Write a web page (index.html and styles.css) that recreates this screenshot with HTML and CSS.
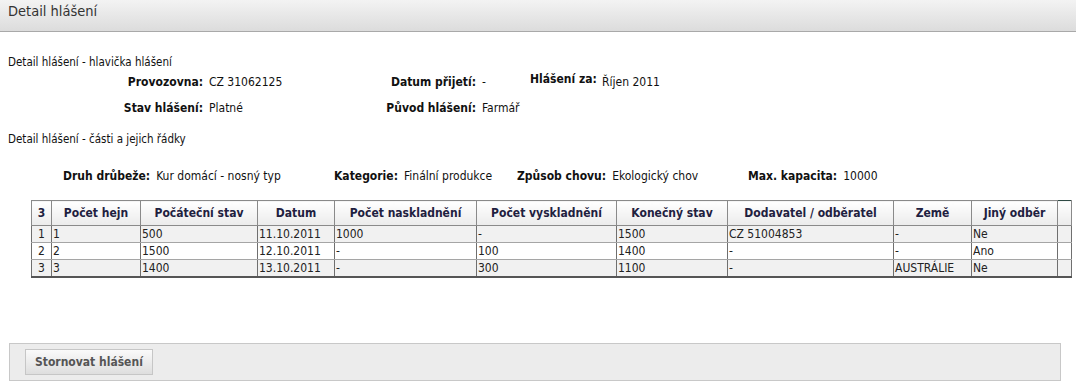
FILE: index.html
```html
<!DOCTYPE html>
<html lang="cs">
<head>
    <meta charset="UTF-8">
    <title>Detail hlášení</title>
    <link rel="stylesheet" href="styles.css">
</head>
<body>
    <div class="page-header">Detail hlášení</div>

    <div class="content">
        <div class="section-title first">Detail hlášení - hlavička hlášení</div>
        <div class="head-grid">
            <span class="lbl">Provozovna:</span>
            <span class="val">CZ 31062125</span>
            <span class="lbl">Datum přijetí:</span>
            <span class="val">-</span>
            <span class="lbl lbl-left">Hlášení za:</span>
            <span class="val">Říjen 2011</span>

            <span class="lbl">Stav hlášení:</span>
            <span class="val">Platné</span>
            <span class="lbl">Původ hlášení:</span>
            <span class="val">Farmář</span>
            <span></span>
            <span></span>
        </div>

        <div class="section-title">Detail hlášení - části a jejich řádky</div>
        <div class="part-row">
            <div class="pair"><b>Druh drůbeže:</b><span>Kur domácí - nosný typ</span></div>
            <div class="pair"><b>Kategorie:</b><span>Finální produkce</span></div>
            <div class="pair"><b>Způsob chovu:</b><span>Ekologický chov</span></div>
            <div class="pair"><b>Max. kapacita:</b><span>10000</span></div>
        </div>

        <table class="grid">
            <colgroup>
                <col style="width: 20px">
                <col style="width: 89px">
                <col style="width: 117px">
                <col style="width: 77px">
                <col style="width: 142px">
                <col style="width: 140px">
                <col style="width: 111px">
                <col style="width: 166px">
                <col style="width: 78px">
                <col style="width: 86px">
                <col style="width: 14px">
            </colgroup>
            <thead>
                <tr>
                    <th>3</th>
                    <th>Počet hejn</th>
                    <th>Počáteční stav</th>
                    <th>Datum</th>
                    <th>Počet naskladnění</th>
                    <th>Počet vyskladnění</th>
                    <th>Konečný stav</th>
                    <th>Dodavatel / odběratel</th>
                    <th>Země</th>
                    <th>Jiný odběr</th>
                    <th class="filler"></th>
                </tr>
            </thead>
            <tbody>
                <tr class="odd">
                    <td class="num">1</td><td>1</td><td>500</td><td>11.10.2011</td><td>1000</td><td>-</td><td>1500</td><td>CZ 51004853</td><td>-</td><td>Ne</td><td></td>
                </tr>
                <tr>
                    <td class="num">2</td><td>2</td><td>1500</td><td>12.10.2011</td><td>-</td><td>100</td><td>1400</td><td>-</td><td>-</td><td>Ano</td><td></td>
                </tr>
                <tr class="odd">
                    <td class="num">3</td><td>3</td><td>1400</td><td>13.10.2011</td><td>-</td><td>300</td><td>1100</td><td>-</td><td>AUSTRÁLIE</td><td>Ne</td><td></td>
                </tr>
            </tbody>
        </table>
    </div>

    <div class="footer-bar">
        <button class="btn" type="button">Stornovat hlášení</button>
    </div>
</body>
</html>
```

FILE: styles.css
```css
body {
    margin: 0;
    padding: 0;
    font-family: "DejaVu Sans Condensed", "DejaVu Sans", sans-serif;
    font-size: 12px;
    line-height: 14px;
    color: #111;
    background: #fff;
}

.page-header {
    height: 32px;
    padding: 3px 0 0 8px;
    box-sizing: border-box;
    font-size: 14.5px;
    line-height: 17px;
    color: #333;
    background: linear-gradient(#f3f3f3, #dcdcdc);
    border-bottom: 1px solid #a9a9a9;
}

.content {
    padding: 0 0 0 8px;
}

.section-title {
    margin-top: 17px;
    font-size: 11.5px;
}

.section-title.first {
    margin-top: 23px;
}

.head-grid {
    display: grid;
    grid-template-columns: 195px 170px 91px 42px 66px auto;
    column-gap: 6px;
    row-gap: 12px;
    margin-top: 6px;
    align-items: start;
    white-space: nowrap;
}

.head-grid .lbl {
    font-weight: bold;
    text-align: right;
}

.head-grid .lbl-left {
    text-align: left;
    margin-top: -3px;
}

.part-row {
    display: grid;
    grid-template-columns: 271px 183px 231px auto;
    padding-left: 55px;
    margin-top: 23px;
    white-space: nowrap;
}

.pair {
    display: flex;
    gap: 6px;
}

.grid {
    margin: 17px 0 0 23px;
    width: 1040px;
    table-layout: fixed;
    border-collapse: collapse;
    border: 1px solid #555;
    border-bottom: 2px solid #555;
}

.grid th {
    height: 24px;
    padding: 0 2px;
    font-weight: bold;
    font-size: 12px;
    color: #1f2140;
    background: linear-gradient(#ffffff, #ebebeb);
    border: 1px solid #8a8a8a;
    white-space: nowrap;
    overflow: hidden;
}

.grid th.filler {
    border-top-color: #2f4a45;
}

.grid td {
    height: 16px;
    padding: 0 1px;
    font-size: 12px;
    line-height: 16px;
    color: #222;
    border-left: 1px solid #6f6f6f;
    border-right: 1px solid #6f6f6f;
    border-bottom: 1px solid #a5a5a5;
    white-space: nowrap;
    overflow: hidden;
}

.grid td.num {
    text-align: center;
}

.grid tr.odd td {
    background: #f1f1f1;
}

.footer-bar {
    margin: 65px 15px 6px 9px;
    padding: 5px 15px;
    background: #ececec;
    border: 1px solid #c8c8c8;
}

.btn {
    height: 26px;
    padding: 0 9px;
    font-family: "DejaVu Sans Condensed", "DejaVu Sans", sans-serif;
    font-size: 12px;
    font-weight: bold;
    color: #555;
    background: linear-gradient(#fafafa, #dedede);
    border: 1px solid #c6c6c6;
    border-radius: 0;
}
```
